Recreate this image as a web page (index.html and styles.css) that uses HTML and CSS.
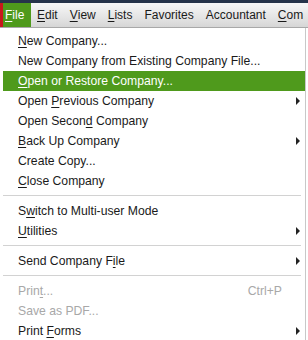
FILE: index.html
```html
<!DOCTYPE html>
<html>
<head>
<meta charset="utf-8">
<link rel="stylesheet" href="styles.css">
</head>
<body>
<div class="topband"></div>
<div class="menubar">
  <div class="flag"></div>
  <div class="mb-item active"><u>F</u>ile</div>
  <div class="mb-item"><u>E</u>dit</div>
  <div class="mb-item"><u>V</u>iew</div>
  <div class="mb-item"><u>L</u>ists</div>
  <div class="mb-item">Favorites</div>
  <div class="mb-item">Accountant</div>
  <div class="mb-item"><u>C</u>om</div>
</div>
<div class="menu">
  <div class="item"><span class="label"><u>N</u>ew Company...</span></div>
  <div class="item"><span class="label">New Company from Existing Company File...</span></div>
  <div class="item hl"><span class="label"><u>O</u>pen or Restore Company...</span></div>
  <div class="item"><span class="label">Open <u>P</u>revious Company</span><span class="arrow"></span></div>
  <div class="item"><span class="label">Open Secon<u>d</u> Company</span></div>
  <div class="item"><span class="label"><u>B</u>ack Up Company</span><span class="arrow"></span></div>
  <div class="item"><span class="label">Create Copy...</span></div>
  <div class="item"><span class="label"><u>C</u>lose Company</span></div>
  <div class="sep"></div>
  <div class="item"><span class="label">S<u>w</u>itch to Multi-user Mode</span></div>
  <div class="item"><span class="label"><u>U</u>tilities</span><span class="arrow"></span></div>
  <div class="sep"></div>
  <div class="item"><span class="label">Send Company F<u>i</u>le</span><span class="arrow"></span></div>
  <div class="sep"></div>
  <div class="item disabled"><span class="label">Prin<u>t</u>...</span><span class="shortcut">Ctrl+P</span></div>
  <div class="item disabled"><span class="label">Save as PDF...</span></div>
  <div class="item"><span class="label">Print <u>F</u>orms</span><span class="arrow"></span></div>
</div>
</body>
</html>
```
FILE: styles.css
```css
html, body {
  margin: 0;
  padding: 0;
  background: #ffffff;
  overflow: hidden;
}
body {
  width: 308px;
  height: 340px;
  font-family: "Liberation Sans", Arial, sans-serif;
  font-size: 12px;
  color: #1a1a1a;
}
.topband {
  height: 3px;
  background: #26344a;
}
.menubar {
  height: 24px;
  display: flex;
  align-items: stretch;
  background: linear-gradient(#f7f7f7, #e4e4e4 60%, #d6d6d6);
  border-bottom: 1px solid #a8a8a8;
  overflow: hidden;
}
.flag {
  width: 3px;
  flex: none;
  background: #c8171d;
}
.mb-item {
  display: flex;
  align-items: center;
  flex: none;
  padding: 0 6px;
  font-size: 12px;
  white-space: nowrap;
}
.mb-item.active {
  background: #4f9a1c;
  color: #ffffff;
  width: 28px;
  box-sizing: border-box;
  padding: 0 0 0 2px;
}
.menu {
  width: 302px;
  margin-left: 3px;
  border-right: 1px solid #c8c8c8;
  background: #ffffff;
  padding-top: 3px;
  height: 320px;
}
.item {
  height: 20px;
  display: flex;
  align-items: center;
  padding-left: 15px;
  padding-right: 5px;
  font-size: 12.2px;
  color: #1a1a1a;
  white-space: nowrap;
}
.item .label {
  flex: 1;
}
.item.hl {
  background: #4f9a1c;
  color: #ffffff;
}
.item.disabled {
  color: #a8a8a8;
}
.shortcut {
  margin-right: 18px;
}
.arrow {
  width: 0;
  height: 0;
  border-top: 4px solid transparent;
  border-bottom: 4px solid transparent;
  border-left: 4px solid #222222;
}
.sep {
  height: 1px;
  background: #d2d2d2;
  margin: 4px 4px 5px 0;
}
u {
  text-decoration: underline;
  text-underline-offset: 2px;
}
```
